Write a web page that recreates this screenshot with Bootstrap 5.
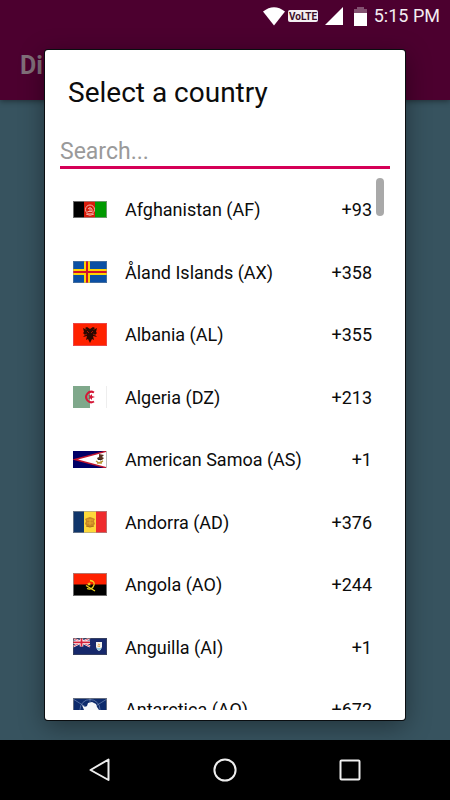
<!DOCTYPE html>
<html lang="en">
<head>
<meta charset="utf-8">
<meta name="viewport" content="width=device-width, initial-scale=1">
<title>Select a country</title>
<link href="https://cdn.jsdelivr.net/npm/bootstrap@5.3.0/dist/css/bootstrap.min.css" rel="stylesheet">
<style>
body { font-family: Roboto, "Noto Sans", sans-serif; background: #37535f; color: #0c0c0c; }
.app-head { background: #4c002f; height: 100px; box-shadow: 0 1px 6px rgba(0,0,0,.45); }
.status-bar { height: 32px; padding: 0 10px; gap: 7px; color: #f3edf1; font-size: 18px; line-height: 32px; }
.signals { gap: 3px; }
.app-title { height: 68px; padding: 0 20px; font-size: 25px; font-weight: 700; color: #806f79; }
.dialog-layer { inset: 50px 45px 80px; }
.picker { background: #fff; border-radius: 3px; box-shadow: 0 0 0 1px #0a0d10, 0 6px 26px rgba(0,0,0,.4); padding: 0 15px 10px; }
.picker-title { font-size: 28px; line-height: 34px; padding: 26px 8px 0; font-weight: 400; }
.search-box { font-size: 23px; line-height: 32px; height: 35px; margin-top: 24px; border: 0; border-bottom: 3px solid #d50057; background: none; outline: 0; padding: 2px 0 0; color: #111; }
.search-box::placeholder { color: #9a9a9a; opacity: 1; }
.countries { flex: 1 1 0; min-height: 0; padding-top: 9px; overflow-y: auto; scrollbar-width: none; }
.countries::-webkit-scrollbar { display: none; }
.country { height: 62px; padding: 0 18px 0 13px; background: none; border: 0; font-size: 18px; line-height: 24px; color: #0c0c0c; }
li:nth-child(even) .country { height: 63px; }
.country span { padding-top: 2px; }
.flag { width: 34px; margin-right: 18px; flex: none; }
.thumb { width: 8px; height: 38px; border-radius: 4px; background: #a9a9a9; top: 9px; right: 6px; }
.nav-keys { height: 60px; background: #000; padding: 0 38px; }
.nav-keys button { width: 125px; background: none; border: 0; padding: 0; }
.nav-keys svg { display: block; margin: 0 auto; }
</style>
<script src="https://cdn.jsdelivr.net/npm/bootstrap@5.3.0/dist/js/bootstrap.bundle.min.js"></script>
</head>
<body class="d-flex flex-column vh-100 position-relative overflow-hidden">
<header class="app-head d-flex flex-column">
  <div class="status-bar d-flex align-items-center justify-content-end">
    <div class="signals d-flex align-items-center">
      <svg width="22" height="19" viewBox="0 0 22 19"><path d="M0 4.500Q11-4 22 4.500L11 18.500Z" fill="#fff"/></svg>
      <svg width="30" height="12" viewBox="0 0 30 12"><rect width="30" height="12" rx="2" fill="#f3edf1"/><text x="15" y="9.500" font-family="Roboto, sans-serif" font-size="10" font-weight="700" fill="#3c1029" text-anchor="middle">VoLTE</text></svg>
    </div>
    <svg width="18" height="18" viewBox="0 0 18 18"><path d="M18 0V18H0Z" fill="#fff"/></svg>
    <svg class="ms-1" width="13" height="19" viewBox="0 0 13 19"><path d="M3 0H10V2H13V6H0V2H3Z" fill="#835170"/><path d="M0 6H13V19H0Z" fill="#fff"/></svg>
    <span>5:15 PM</span>
  </div>
  <div class="app-title d-flex align-items-center">Di</div>
</header>
<main class="flex-grow-1"></main>

<section class="dialog-layer position-absolute d-flex" role="dialog" aria-labelledby="pick">
  <div class="picker d-flex flex-column flex-grow-1">
    <h1 class="picker-title m-0" id="pick">Select a country</h1>
    <input class="search-box w-100" type="text" placeholder="Search..." aria-label="Search">
    <div class="position-relative d-flex flex-column flex-grow-1">
      <ul class="countries list-unstyled m-0">
        <li><button class="country w-100 d-flex align-items-center text-start">
          <svg class="flag" height="17" viewBox="0 0 34 17"><path d="M0 0H11V17H0Z" fill="#000"/><path d="M11 0H22V17H11Z" fill="#d81b0b"/><path d="M22 0H34V17H22Z" fill="#009a00"/><g fill="none" stroke="#f3b5a8"><circle cx="17" cy="8.500" r="4.500"/><path d="M14.500 10.500H19.500M15 8Q17 5 19 8V10M17 7V11M13 13Q17 15.500 21 13"/></g><rect x=".5" y=".5" width="33" height="16" fill="none" stroke="#999" stroke-opacity=".7"/></svg>
          <span class="flex-grow-1">Afghanistan (AF)</span><span>+93</span></button></li>
        <li><button class="country w-100 d-flex align-items-center text-start">
          <svg class="flag" height="22" viewBox="0 0 34 22"><path d="M0 0H34V22H0Z" fill="#0b50a4"/><path d="M14 0V22M0 11H34" stroke="#ffd300" stroke-width="6"/><path d="M14 0V22M0 11H34" stroke="#d2102c" stroke-width="2"/><rect x=".5" y=".5" width="33" height="21" fill="none" stroke="#999" stroke-opacity=".4"/></svg>
          <span class="flex-grow-1">Åland Islands (AX)</span><span>+358</span></button></li>
        <li><button class="country w-100 d-flex align-items-center text-start">
          <svg class="flag" height="23" viewBox="0 0 34 23"><path d="M0 0H34V23H0Z" fill="#ff2200"/><path d="M17 6L14 4L12 5L14 7L10 5L11 9L10 10L12 12L10 14L14 13L13 17L15 16L17 20L19 16L21 17L20 13L24 14L22 12L24 10L23 9L24 5L20 7L22 5L20 4Z" fill="#290800"/><path d="M14 8L16 10M20 8L18 10M12 12L14 11M22 12L20 11" stroke="#a51500"/><rect x=".5" y=".5" width="33" height="22" fill="none" stroke="#ed4545"/></svg>
          <span class="flex-grow-1">Albania (AL)</span><span>+355</span></button></li>
        <li><button class="country w-100 d-flex align-items-center text-start">
          <svg class="flag" height="22" viewBox="0 0 34 22"><path d="M0 0H34V22H0Z" fill="#fff"/><path d="M0 0H17V22H0Z" fill="#7fa88b"/><path d="M21 6.500A5.200 5.200 0 1 0 21 15.500" fill="none" stroke="#d51737" stroke-width="2"/><path d="M22 11L19 12L19 14L17.500 12.500L15.500 13L16.500 11L15.500 9L17.500 9.500L19 8L19 10Z" fill="#d51737"/><path d="M33.500 0V22" stroke="#eee"/></svg>
          <span class="flex-grow-1">Algeria (DZ)</span><span>+213</span></button></li>
        <li><button class="country w-100 d-flex align-items-center text-start">
          <svg class="flag" height="17" viewBox="0 0 34 17"><path d="M0 0H34V17H0Z" fill="#000067"/><path d="M34 0V17L2 8.500Z" fill="#fff" stroke="#c0152d" stroke-width="1.500"/><path d="M26 3L31 4L29 6L31 7L29 9H25L24 7L26 6Z" fill="#583322"/><path d="M23 10L26 12L30 10M24 12H29" stroke="#b79636" stroke-width="1.500" fill="none"/><path d="M25 8L28 9" stroke="#222"/><path d="M33.500 0V17" stroke="#bbb"/></svg>
          <span class="flex-grow-1">American Samoa (AS)</span><span>+1</span></button></li>
        <li><button class="country w-100 d-flex align-items-center text-start">
          <svg class="flag" height="22" viewBox="0 0 34 22"><path d="M0 0H11V22H0Z" fill="#10366b"/><path d="M11 0H23V22H11Z" fill="#fed93b"/><path d="M23 0H34V22H23Z" fill="#ef2b2d"/><path d="M12 8L14 7L17 6L20 7L22 8L21 10L22 13L20 15L17 16L14 15L12 13L13 10Z" fill="#c98725"/><path d="M14 9H20M14 12H20M17 8V14" stroke="#e4aa2c"/><path d="M13 15Q17 17 21 15" fill="none" stroke="#a8691c"/><rect x=".5" y=".5" width="33" height="21" fill="none" stroke="#999" stroke-opacity=".6"/></svg>
          <span class="flex-grow-1">Andorra (AD)</span><span>+376</span></button></li>
        <li><button class="country w-100 d-flex align-items-center text-start">
          <svg class="flag" height="23" viewBox="0 0 34 23"><path d="M0 0H34V12H0Z" fill="#ff2100"/><path d="M0 11.500H34V23H0Z" fill="#000"/><g fill="none" stroke="#f2d51f" stroke-width="1.300"><path d="M17 7.500Q22 8 21 12Q19 17.500 14 15.500"/><path d="M13 12.500L22 18"/></g><path d="M16 9L17 10.500H18L17 12L17.500 13L16 12L14.500 13L15 11.500L14 10.500H15.500Z" fill="#f2d51f"/><rect x=".5" y=".5" width="33" height="22" fill="none" stroke="#999" stroke-opacity=".7"/></svg>
          <span class="flex-grow-1">Angola (AO)</span><span>+244</span></button></li>
        <li><button class="country w-100 d-flex align-items-center text-start">
          <svg class="flag" height="17" viewBox="0 0 34 17"><path d="M0 0H34V17H0Z" fill="#16286b"/><path d="M0 0L17 8.500M17 0L0 8.500" stroke="#fff" stroke-width="2"/><path d="M0 0L17 8.500M17 0L0 8.500" stroke="#d6213a" stroke-width=".8"/><path d="M8.500 0V8.500M0 4.300H17" stroke="#fff" stroke-width="3.500"/><path d="M8.500 0V8.500M0 4.300H17" stroke="#d6213a" stroke-width="1.800"/><path d="M23 4H29V9Q28 12 26 13Q24 12 23 9Z" fill="#f4f4ec"/><path d="M23.500 10H28.500Q28 12 26 12.500Q24 12 23.500 10Z" fill="#8fc9e0"/><path d="M25 6L27 7M24.500 8L27 8.500" stroke="#e4a54b"/><rect x=".5" y=".5" width="33" height="16" fill="none" stroke="#555" stroke-opacity=".5"/></svg>
          <span class="flex-grow-1">Anguilla (AI)</span><span>+1</span></button></li>
        <li><button class="country w-100 d-flex align-items-center text-start">
          <svg class="flag" height="23" viewBox="0 0 34 23"><path d="M0 0H34V23H0Z" fill="#0c2a6c"/><g fill="none" stroke="#6f86b5" stroke-width=".7"><circle cx="17" cy="11.500" r="10"/><path d="M0 1L34 22M34 1L0 22M17 0V23"/></g><path d="M9 7L12 9L14 8L15 5L19 4L23 6L24 9L26 12L25 16L20 19L16 18L15 14L11 12Z" fill="#f4f7fb"/><rect x=".5" y=".5" width="33" height="22" fill="none" stroke="#888" stroke-opacity=".7"/></svg>
          <span class="flex-grow-1">Antarctica (AQ)</span><span>+672</span></button></li>
      </ul>
      <div class="thumb position-absolute"></div>
    </div>
  </div>
</section>

<nav class="nav-keys d-flex justify-content-between align-items-center" aria-label="System">
  <button aria-label="Back"><svg width="24" height="26" viewBox="0 0 24 26"><path d="M20.500 2.500V23L2.500 13Z" fill="none" stroke="#eee" stroke-width="2" stroke-linejoin="round"/></svg></button>
  <button aria-label="Home"><svg width="26" height="26" viewBox="0 0 26 26"><circle cx="13" cy="13" r="10.600" fill="none" stroke="#eee" stroke-width="2"/></svg></button>
  <button aria-label="Recent apps"><svg width="22" height="22" viewBox="0 0 22 22"><rect x="1.500" y="1.500" width="19" height="19" rx="1" fill="none" stroke="#eee" stroke-width="2"/></svg></button>
</nav>
</body>
</html>
